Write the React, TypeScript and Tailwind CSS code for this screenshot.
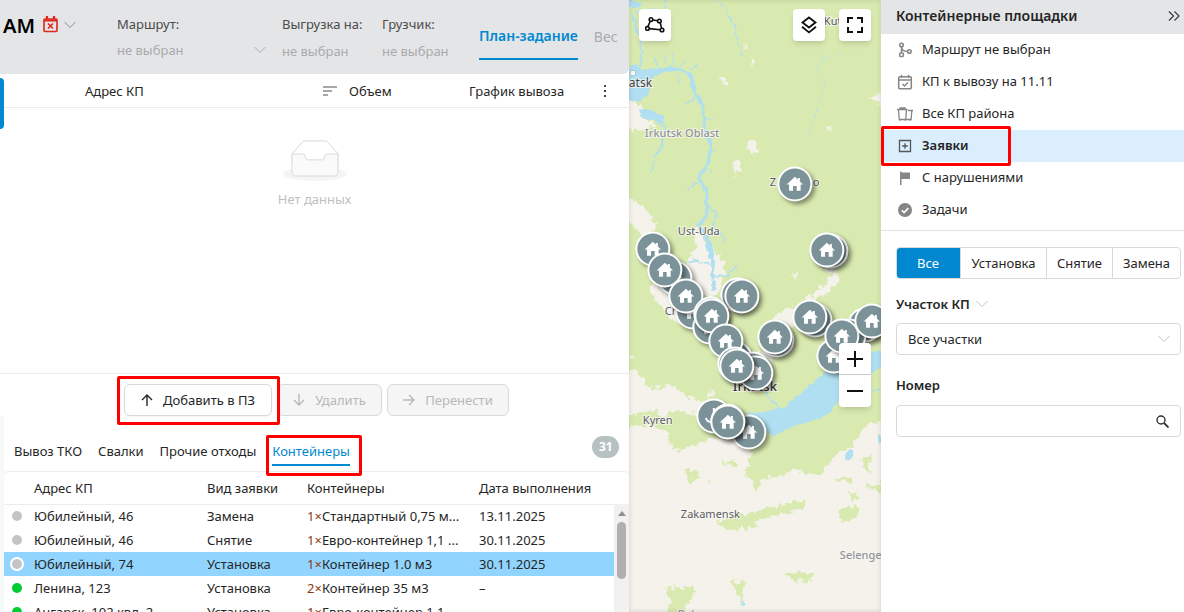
import { useState, type ReactNode } from "react";
import clsx from "clsx";

type Request = {
  address: string;
  kind: string;
  count: number;
  container: string;
  date: string;
  status: "idle" | "done";
};

const REQUESTS: Request[] = [
  { address: "Юбилейный, 46", kind: "Замена", count: 1, container: "Стандартный 0,75 м...", date: "13.11.2025", status: "idle" },
  { address: "Юбилейный, 46", kind: "Снятие", count: 1, container: "Евро-контейнер 1,1 ...", date: "30.11.2025", status: "idle" },
  { address: "Юбилейный, 74", kind: "Установка", count: 1, container: "Контейнер 1.0 м3", date: "30.11.2025", status: "idle" },
  { address: "Ленина, 123", kind: "Установка", count: 2, container: "Контейнер 35 м3", date: "–", status: "done" },
  { address: "Ангарск, 102 квл, 2", kind: "Установка", count: 1, container: "Евро-контейнер 1,1", date: "", status: "done" },
];

const TABS = ["Вывоз ТКО", "Свалки", "Прочие отходы", "Контейнеры"];

// later pins are drawn over earlier ones
const PINS: [number, number][] = [
  [166, 184],
  [24, 249],
  [46, 278],
  [36, 270],
  [64, 312],
  [57, 296],
  [109, 295],
  [113, 296],
  [81, 327],
  [82, 314],
  [83, 316],
  [106, 358],
  [97, 341],
  [124, 369],
  [127, 373],
  [106, 364],
  [108, 366],
  [202, 251],
  [198, 250],
  [148, 340],
  [146, 337],
  [186, 320],
  [181, 317],
  [205, 356],
  [236, 325],
  [220, 336],
  [213, 336],
  [243, 321],
  [85, 416],
  [120, 432],
  [99, 421],
  [99, 422],
];

function Chevron({ className }: { className?: string }) {
  return (
    <svg className={className} width="12" height="8" viewBox="0 0 12 8" fill="none" stroke="currentColor" aria-hidden="true">
      <path d="M.5 1 6 6.5 11.5 1" />
    </svg>
  );
}

function Arrow({ dir }: { dir: "up" | "down" | "right" }) {
  return (
    <svg
      className={clsx("shrink-0", dir === "down" && "rotate-180", dir === "right" && "rotate-90")}
      width="12"
      height="14"
      viewBox="0 0 12 14"
      fill="none"
      stroke="currentColor"
      strokeWidth="1.4"
      aria-hidden="true"
    >
      <path d="M6 13V2M1 7l5-5 5 5" />
    </svg>
  );
}

function Callout({ className }: { className: string }) {
  return <span className={clsx("pointer-events-none absolute z-10 rounded-xs border-3 border-[#fe0000]", className)} />;
}

function TopBar() {
  return (
    <header className="flex h-[74px] shrink-0 overflow-hidden rounded-br-md bg-[#e4e5e7] pl-[3px]">
      <div className="flex w-[114px] shrink-0 items-start pt-3">
        <h1 className="w-10 text-[20px] leading-7 font-semibold text-black">АМ</h1>
        <button type="button" aria-label="Календарь" className="flex items-center gap-1.5 pt-1 text-[#8c8c8c]">
          <svg width="15" height="17" viewBox="0 0 15 17" fill="none" stroke="#e0261c" strokeWidth="1.6" aria-hidden="true">
            <rect x="1" y="3" width="13" height="12.5" rx="1" />
            <path d="M1 4.5h13M4 0v3M11 0v3" strokeWidth="2.2" />
            <path d="m5 7.5 5 5m0-5-5 5" />
          </svg>
          <Chevron />
        </button>
      </div>
      <div className="w-[165px] shrink-0 pt-3.5">
        <label htmlFor="route" className="block h-5 leading-5 text-[#4b4b4b]">Маршрут:</label>
        <div className="relative mt-1.5 w-[149px]">
          <select id="route" className="block h-5 w-full appearance-none bg-transparent leading-5 text-[#a9abad]">
            <option>не выбран</option>
          </select>
          <Chevron className="pointer-events-none absolute top-1.5 right-0 text-[#a9abad]" />
        </div>
      </div>
      <div className="w-[100px] shrink-0 pt-3.5">
        <p className="h-5 leading-5 whitespace-nowrap text-[#4b4b4b]">Выгрузка на:</p>
        <p className="mt-[7px] leading-5 text-[#a9abad]">не выбран</p>
      </div>
      <div className="w-[97px] shrink-0 pt-3.5">
        <p className="h-5 leading-5 text-[#4b4b4b]">Грузчик:</p>
        <p className="mt-[7px] leading-5 text-[#a9abad]">не выбран</p>
      </div>
      <nav className="flex shrink-0 gap-4 pt-3.5 text-[14px]">
        <button type="button" className="h-[46px] border-b-2 border-[#0288d1] font-semibold text-[#0288d1]">План-задание</button>
        <button type="button" className="h-[46px] text-[#a9abad]">Вес</button>
      </nav>
    </header>
  );
}

function PlanTable() {
  return (
    <section className="relative flex h-[300px] shrink-0 flex-col border-b border-[#ececec]">
      <span className="absolute top-1 left-0 h-[51px] w-1 rounded-r-sm bg-[#0288d1]" />
      <div className="ml-1 flex h-[34px] shrink-0 items-center border-b border-[#ececec] pr-[11px]">
        <span className="w-[319px] shrink-0 pl-[81px]">Адрес КП</span>
        <button type="button" aria-label="Сортировать" className="w-[26px] shrink-0">
          <svg width="14" height="10" viewBox="0 0 14 10" stroke="#8a8a8a" strokeWidth="1.6" aria-hidden="true">
            <path d="M0 1h14M0 5h9M0 9h5" />
          </svg>
        </button>
        <span className="w-[120px] shrink-0">Объем</span>
        <span className="flex-1 whitespace-nowrap">График вывоза</span>
        <button type="button" aria-label="Меню" className="px-[11px]">
          <svg width="3" height="14" viewBox="0 0 3 14" fill="#444" aria-hidden="true">
            <path d="M0 1h2v2H0zM0 6h2v2H0zM0 11h2v2H0z" />
          </svg>
        </button>
      </div>
      <div className="flex flex-col items-center pt-8 text-[#bfbfbf]">
        <svg width="64" height="41" viewBox="0 0 64 41" aria-hidden="true">
          <g transform="translate(0 1)" fill="none" fillRule="evenodd">
            <ellipse fill="#f5f5f5" cx="32" cy="33" rx="32" ry="7" />
            <g fillRule="nonzero" stroke="#d9d9d9">
              <path fill="#fff" d="M55 12.76 44.854 1.258C44.367.474 43.656 0 42.907 0H21.093c-.749 0-1.46.474-1.947 1.257L9 12.761V22h46v-9.24z" />
              <path d="M41.613 15.931c0-1.605.994-2.93 2.227-2.931H55v18.137C55 33.26 53.68 35 52.05 35h-40.1C10.32 35 9 33.259 9 31.137V13h11.16c1.233 0 2.227 1.323 2.227 2.928v.022c0 1.605 1.005 2.901 2.237 2.901h14.752c1.232 0 2.237-1.308 2.237-2.913v-.007z" fill="#fafafa" />
            </g>
          </g>
        </svg>
        <p className="mt-2 leading-5">Нет данных</p>
      </div>
    </section>
  );
}

function Actions() {
  return (
    <div className="flex shrink-0 gap-[5px] pt-2.5 pl-[124px]">
      <div className="relative">
        <button type="button" className="flex h-8 w-[148px] items-center justify-center gap-2.5 rounded-md border border-[#d9d9d9] bg-white shadow-xs">
          <Arrow dir="up" />
          Добавить в ПЗ
        </button>
        <Callout className="-top-2 -right-2 -left-[7px] h-[49px]" />
      </div>
      <button type="button" disabled className="flex h-8 w-[105px] items-center justify-center gap-2.5 rounded-md border border-[#d9d9d9] bg-[#f5f5f5] text-[#b8b8b8]">
        <Arrow dir="down" />
        Удалить
      </button>
      <button type="button" disabled className="flex h-8 w-[122px] items-center justify-center gap-2.5 rounded-md border border-[#d9d9d9] bg-[#f5f5f5] text-[#b8b8b8]">
        <Arrow dir="right" />
        Перенести
      </button>
    </div>
  );
}

function Requests() {
  const [tab, setTab] = useState("Контейнеры");
  const [selected, setSelected] = useState(2);

  return (
    <section className="flex min-h-0 flex-1 flex-col bg-[#f7f9f9] pl-1">
      <div className="flex h-[55px] shrink-0 items-start gap-4 bg-white pt-5 pl-2.5">
        {TABS.map((t) => (
          <div key={t} className="relative">
            <button
              type="button"
              onClick={() => setTab(t)}
              className={clsx("h-[30px] whitespace-nowrap border-b-2 pt-0.5", t === tab ? "border-[#0288d1] text-[#0288d1]" : "border-transparent")}
            >
              {t}
            </button>
            {t === "Контейнеры" ? <Callout className="-top-px -right-3 -left-1.5 h-[41px]" /> : null}
          </div>
        ))}
        <span className="mr-2.5 ml-auto flex h-[22px] w-[27px] items-center justify-center rounded-full bg-[#b7c1c2] text-[12px] font-bold text-white">
          31
        </span>
      </div>
      <div className="flex min-h-0 flex-1 flex-col overflow-hidden rounded-t-md border-t border-[#ececec] bg-white">
        <div className="relative min-h-0 flex-1 overflow-hidden">
          <table className="w-full table-fixed border-collapse text-left whitespace-nowrap">
            <colgroup>
              <col className="w-[30px]" />
              <col className="w-[173px]" />
              <col className="w-[100px]" />
              <col className="w-[172px]" />
              <col />
              <col className="w-[15px]" />
            </colgroup>
            <thead>
              <tr className="h-8 border-b border-[#ececec]">
                <th aria-label="Статус" />
                <th className="font-normal">Адрес КП</th>
                <th className="font-normal">Вид заявки</th>
                <th className="font-normal">Контейнеры</th>
                <th className="font-normal">Дата выполнения</th>
                <th aria-hidden="true" />
              </tr>
            </thead>
            <tbody>
              {REQUESTS.map((r, i) => (
                <tr key={i} onClick={() => setSelected(i)} className={clsx("h-6", i === selected && "bg-[#91d5ff]")}>
                  <td className="pl-[6px]">
                    <span
                      className={clsx(
                        "block size-3.5 rounded-full border-2",
                        i === selected ? "border-white" : "border-transparent",
                        "bg-clip-padding",
                        r.status === "done" ? "bg-[#00cc33]" : "bg-[#c4c4c4]",
                      )}
                    />
                  </td>
                  <td>{r.address}</td>
                  <td>{r.kind}</td>
                  <td>
                    <span className="text-[#8a3b12]">{r.count}×</span>
                    {r.container}
                  </td>
                  <td>{r.date}</td>
                  <td />
                </tr>
              ))}
            </tbody>
          </table>
          <div className="absolute top-8 right-0 bottom-0 w-[15px] bg-[#f1f1f1]">
            <span className="mx-auto mt-[7px] block h-0 w-0 border-x-4 border-b-5 border-x-transparent border-b-[#8f8f8f]" />
            <span className="mx-auto mt-1.5 block h-[57px] w-[9px] rounded-full bg-[#b0b0b0]" />
          </div>
        </div>
      </div>
    </section>
  );
}

function MapBackground() {
  return (
    <svg className="absolute inset-0 h-full w-full" viewBox="0 0 252 612" preserveAspectRatio="xMidYMin slice" aria-hidden="true">
      <defs>
        <filter id="coast" x="-10%" y="-10%" width="120%" height="120%">
          <feTurbulence type="fractalNoise" baseFrequency="0.16" numOctaves="3" seed="4" />
          <feDisplacementMap in="SourceGraphic" scale="11" xChannelSelector="R" yChannelSelector="G" />
        </filter>
        <filter id="river" x="-10%" y="-10%" width="120%" height="120%">
          <feTurbulence type="fractalNoise" baseFrequency="0.2" numOctaves="2" seed="9" />
          <feDisplacementMap in="SourceGraphic" scale="5" xChannelSelector="R" yChannelSelector="G" />
        </filter>
      </defs>
      <rect width="252" height="612" fill="#d9eab0" />
      <g fill="#f4f2ea" filter="url(#coast)">
        <path d="M-10 430 20 424 40 432 43 450 60 448 78 440 95 438 122 446 120 463 114 474 135 476 165 470 190 475 205 458 222 446 240 424 265 418V625H-10z" />
        <path d="M-10 366 8 372 20 388 44 386 62 398 76 405 66 414 50 410 34 416 22 410 6 414-10 412z" />
        <path d="M-10 203 8 203 22 214 27 224 22 234 30 246 20 252 12 234 4 224-10 226z" />
        <path d="M-5 198 4 200 14 208 4 212z" />
        <path d="M68 226 76 236 84 252 96 262 94 278 90 295 80 297 70 290 56 276 58 262 66 250z" />
        <path d="M22 272 38 280 50 300 60 316 58 325 44 320 32 306 22 294z" />
        <path d="M144 318 156 308 166 308 180 296 198 283 206 270 210 280 200 292 190 297 182 310 160 330 146 326z" />
        <path d="M192 262 204 246 210 258 202 275z" />
        <path d="M163 274 170 270 168 280z" />
        <path d="M-5 100 12 104 14 118 26 124 22 130 4 130-5 126z" />
        <path d="M90 77 100 82 96 87zM120 57 127 61 122 65zM117 144 124 140 131 149 124 156zM102 161 114 162 108 177 104 168zM146 128 150 131zM198 127 204 128 201 133zM242 97 255 90 255 112zM234 125 239 130zM114 48 121 42 117 50zM0 200 8 205 15 212 0 212z" />
        <path d="M78 340 90 348 84 352zM130 352 142 348 144 362 128 364z" />
        <path d="M81 388 86 392 80 398zM4 355 8 358 3 360z" />
      </g>
      <g fill="#b0dff1" filter="url(#river)">
        <path d="M-5 72 6 64 14 70 28 68 44 66 60 72 66 80 64 90 58 73 44 71 30 74 22 80 20 94 10 102-5 98z" />
        <path d="M10 108 22 110 34 116 36 124 24 120 12 118z" />
        <path d="M-3-2 14 4 8 8-3 6z" />
        <path d="M66 222 76 230 82 242 86 256 84 270 80 256 76 242z" />
        <path d="M265 330 252 352 236 352 214 362 190 377 172 394 156 406 136 412 119 413 115 426 132 430 144 436 168 425 196 417 208 404 226 386 252 366 265 360z" />
        <path d="M222 448 225 456 219 461 216 457z" />
        <path d="M249 434 255 438 250 445z" />
        <path d="M112 598 116 604 114 607z" />
      </g>
      <g fill="none" stroke="#b0dff1" strokeLinecap="round" strokeLinejoin="round" filter="url(#river)">
        <path strokeWidth="3" d="M62 74 66 92 74 106 76 128 82 146 79 164 70 178 78 193V214L70 226 82 244 85 290" />
        <path strokeWidth="1.5" d="M12 30 13 60 10 80M3 14 10 36M26 116 36 128 33 146 26 158 22 172M58 190 68 182M78 205 88 214 84 226 96 240M58 262 66 260 80 264M84 276 98 276 108 266" />
        <path strokeWidth="1.4" d="M84-4 96 8 98 14 106 26 110 46 113 56" strokeDasharray="6 3" />
        <path strokeWidth=".8" d="M212 54 192 60 188 70 196 86 190 106 180 136" strokeDasharray="4 4" />
        <path strokeWidth="1.2" d="M28 66 26 58M38 64 36 56M45 64 44 54M52 68 56 60M62 70 68 64M48 74 52 86M66 98 58 104M78 120 84 118M80 156 86 150M76 170 84 172M136 390 142 400 150 408M242 392 255 388" />
        <path strokeWidth="1.5" d="M36 0 37 8M8 12 24 8" />
      </g>
      <g fill="#d9eab0" filter="url(#coast)">
        <path d="M86 522 104 516 126 512 150 506 178 500 178 506 156 514 128 520 126 528 100 530z" />
        <path d="M208 510 226 506 230 514 218 522 210 518z" />
        <path d="M154 574 166 571 182 572 184 580 170 582z" />
        <path d="M103 582 117 580 114 592 114 604 108 592z" />
        <path d="M36 588 64 586 66 596 56 606 58 620 36 620 42 604z" />
        <path d="M56 470 66 470 72 478 60 482zM78 480 84 480 80 486zM90 462 110 462 108 466zM116 472 140 468 160 474 132 480 126 492 124 480zM232 460 242 454 242 476 236 470zM204 480 224 476 220 482zM234 488 255 480 255 492zM218 490 232 498 224 500z" />
      </g>
      <g fontSize="11" fill="#5c5c66" stroke="#f8f8f2" strokeWidth="2" strokeOpacity="0.8" paintOrder="stroke" className="font-['Noto_Sans',sans-serif]">
        <circle cx="4" cy="73" r="2.5" fill="#fff" stroke="#777" strokeWidth="1" />
        <text x="0" y="87" fontSize="12" fill="#444">atsk</text>
        <text x="16" y="137" fontWeight="500" fill="#92949c">Irkutsk Oblast</text>
        <text x="195" y="25">Kut</text>
        <text x="141" y="186">Z</text>
        <text x="184" y="186">o</text>
        <text x="49" y="235">Ust-Uda</text>
        <text x="36" y="315">Ch</text>
        <text x="104" y="391" fontSize="13" fontWeight="500" fill="#333">Irkutsk</text>
        <text x="14" y="424">Kyren</text>
        <text x="52" y="518">Zakamensk</text>
        <text x="211" y="559" fontWeight="500" fill="#92949c">Selenge</text>
        <text x="49" y="618" fontWeight="500" fill="#92949c">Bab</text>
      </g>
      <g>
        {PINS.map(([x, y], i) => (
          <g key={i} transform={`translate(${x} ${y})`} className="drop-shadow-[3px_3px_2px_rgb(0_0_0/0.4)]">
            <circle r="16.5" fill="#7b9298" stroke="#fff" strokeWidth="2" />
            {x === 85 && y === 416 ? (
              <path d="M0-8V4M-8 2c2 6 12 6 16 0" fill="none" stroke="#fff" strokeWidth="2" />
            ) : (
              <path d="M-1.8 6.8V2H1.8v4.8h4V.4h2.4L5 -2.6V-6H3v1.6L0-7.2-8.2.4h2.4v6.4z" fill="#fff" />
            )}
          </g>
        ))}
      </g>
    </svg>
  );
}

function MapButton({ label, children }: { label: string; children: ReactNode }) {
  return (
    <button type="button" aria-label={label} className="flex size-8 items-center justify-center rounded bg-white text-[#111] shadow-md">
      {children}
    </button>
  );
}

function MapPanel() {
  return (
    <section className="relative overflow-hidden" aria-label="Карта">
      <MapBackground />
      <div className="absolute inset-0 shadow-[inset_0_0_5px_rgb(0_0_0/0.15)]" />
      <div className="absolute top-[9px] right-2.5 left-2.5 flex gap-3.5">
        <MapButton label="Выделить область">
          <svg width="20" height="16" viewBox="0 0 20 16" fill="none" stroke="currentColor" strokeWidth="1.6" aria-hidden="true">
            <path d="m7.8 3 4.8.7M5.2 4.3 3 9.4M4 11.6l11.2 1.2M15.2 5.6l1.4 5.6" />
            <circle cx="6" cy="2.6" r="1.8" />
            <circle cx="14.4" cy="4" r="1.8" />
            <circle cx="2.4" cy="11.4" r="1.8" />
            <circle cx="17" cy="13" r="1.8" />
          </svg>
        </MapButton>
        <span className="flex-1" />
        <MapButton label="Слои">
          <svg width="16" height="18" viewBox="0 0 16 18" fill="none" stroke="currentColor" strokeWidth="1.9" aria-hidden="true">
            <path d="m8 1.5 6.5 5L8 11.6 1.5 6.5zM1 10.8l7 5.6 7-5.6" />
          </svg>
        </MapButton>
        <MapButton label="На весь экран">
          <svg width="16" height="16" viewBox="0 0 16 16" fill="none" stroke="currentColor" strokeWidth="2" aria-hidden="true">
            <path d="M1 6V1h5M10 1h5v5M15 10v5h-5M6 15H1v-5" />
          </svg>
        </MapButton>
      </div>
      <div className="absolute top-[343px] right-2.5 w-8 overflow-hidden rounded bg-white shadow-md">
        <button type="button" aria-label="Приблизить" className="flex h-8 w-full items-center justify-center border-b border-[#ccc]">
          <svg width="16" height="16" viewBox="0 0 16 16" stroke="#111" strokeWidth="2" aria-hidden="true">
            <path d="M0 8h16M8 0v16" />
          </svg>
        </button>
        <button type="button" aria-label="Отдалить" className="flex h-8 w-full items-center justify-center">
          <svg width="16" height="16" viewBox="0 0 16 16" stroke="#111" strokeWidth="2" aria-hidden="true">
            <path d="M0 8h16" />
          </svg>
        </button>
      </div>
    </section>
  );
}

const LAYERS: { label: string; icon: ReactNode }[] = [
  {
    label: "Маршрут не выбран",
    icon: (
      <g strokeWidth="1.5">
        <circle cx="4.5" cy="3" r="1.8" />
        <rect x="2.7" y="11" width="3.6" height="3.6" rx=".8" />
        <circle cx="12.4" cy="9.5" r="1.8" />
        <path d="M4.5 4.8V11M4.5 5c.3 3 3 4.5 6 4.5" />
      </g>
    ),
  },
  {
    label: "КП к вывозу на 11.11",
    icon: (
      <g strokeWidth="1.5">
        <rect x="1.7" y="2.7" width="12.6" height="12" rx="1" />
        <path d="M2 6h12M4.5.8v3M11.5.8v3M5.500 10l2 2 3.500-3.500" />
      </g>
    ),
  },
  {
    label: "Все КП района",
    icon: (
      <g strokeWidth="1.3">
        <path d="M0 3.500h10.500M1.500 3.500l.8 10h6.400l.8-10M3 3.500V2h5v1.500M11 4.500h5M14.800 4.500l-.7 9H9M3 13.500v1.300M8 13.500v1.300M13 13.500v1.300" />
      </g>
    ),
  },
  {
    label: "Заявки",
    icon: (
      <g strokeWidth="1.3">
        <path d="M2.500 2.500h11v11h-11zM5.200 8h5.600M8 5.200v5.600" />
      </g>
    ),
  },
  {
    label: "С нарушениями",
    icon: <path d="M3 1.500h1.500V2.500H13v6.500H4.500V15H3z" fill="currentColor" stroke="none" />,
  },
  {
    label: "Задачи",
    icon: (
      <g>
        <circle cx="8" cy="8" r="7" fill="currentColor" stroke="none" />
        <path d="m4.800 8.200 2.300 2.300 4.200-4.400" stroke="#fff" strokeWidth="1.6" />
      </g>
    ),
  },
];

function Sidebar() {
  const [layer, setLayer] = useState("Заявки");
  const [number, setNumber] = useState("");

  return (
    <aside className="flex flex-col bg-white">
      <div className="flex h-[34px] shrink-0 items-center justify-between bg-[#e4e5e7] pr-1 pb-0.5 pl-[15px]">
        <h2 className="text-[14px] font-semibold">Контейнерные площадки</h2>
        <button type="button" aria-label="Свернуть">
          <svg width="12" height="10" viewBox="0 0 12 10" fill="none" stroke="#333" strokeWidth="1.1" aria-hidden="true">
            <path d="m1 .5 4.500 4.500L1 9.500M6.500.5 11 5 6.500 9.500" />
          </svg>
        </button>
      </div>
      <ul className="border-b border-[#e3e3e3] pb-1">
        {LAYERS.map((l) => (
          <li key={l.label} className="relative">
            <button
              type="button"
              onClick={() => setLayer(l.label)}
              className={clsx("flex h-8 w-full items-center gap-[9px] pb-0.5 pl-4", l.label === layer && "bg-[#dbeefd] font-semibold")}
            >
              <svg
                className={clsx("mt-0.5", l.label === layer ? "text-[#555]" : "text-[#868686]")}
                width="16"
                height="16"
                viewBox="0 0 16 16"
                fill="none"
                stroke="currentColor"
                aria-hidden="true"
              >
                {l.icon}
              </svg>
              {l.label}
            </button>
            {l.label === "Заявки" ? <Callout className="-top-1 left-0 h-10 w-[130px]" /> : null}
          </li>
        ))}
      </ul>
      <div className="flex flex-col pt-4 pr-[3px] pl-[15px]">
        <div className="flex h-8 divide-x divide-[#d9d9d9] overflow-hidden rounded border border-[#d9d9d9]">
          <button type="button" className="-my-px -ml-px w-[65px] bg-[#0288d1] text-white">Все</button>
          <button type="button" className="w-[86px]">Установка</button>
          <button type="button" className="w-[66px]">Снятие</button>
          <button type="button" className="flex-1">Замена</button>
        </div>
        <label htmlFor="district" className="mt-[15px] flex h-5 items-center gap-1.5 font-semibold">
          Участок КП
          <Chevron className="text-[#c4c4c4]" />
        </label>
        <div className="relative mt-[9px]">
          <select id="district" className="h-8 w-full appearance-none rounded border border-[#d9d9d9] bg-white px-[11px]">
            <option>Все участки</option>
          </select>
          <Chevron className="pointer-events-none absolute top-3 right-[11px] text-[#c4c4c4]" />
        </div>
        <label htmlFor="number" className="mt-5 h-5 leading-5 font-semibold">Номер</label>
        <div className="relative mt-2.5">
          <input
            id="number"
            value={number}
            onChange={(e) => setNumber(e.target.value)}
            className="block h-8 w-full rounded border border-[#d9d9d9] px-[11px]"
          />
          <svg className="absolute top-2.5 right-3" width="13" height="13" viewBox="0 0 13 13" fill="none" stroke="#333" aria-hidden="true">
            <circle cx="5" cy="5" r="4" strokeWidth="1.4" />
            <path d="m8 8 4.500 4.500" strokeWidth="1.8" />
          </svg>
        </div>
      </div>
    </aside>
  );
}

export default function App() {
  return (
    <div className="grid h-screen grid-cols-[minmax(0,5fr)_minmax(0,2fr)_303px] grid-rows-1 overflow-hidden bg-white font-['Noto_Sans',sans-serif] text-[13px] leading-5 text-[#262626]">
      <main className="flex min-h-0 flex-col overflow-hidden">
        <TopBar />
        <PlanTable />
        <Actions />
        <Requests />
      </main>
      <MapPanel />
      <Sidebar />
    </div>
  );
}
